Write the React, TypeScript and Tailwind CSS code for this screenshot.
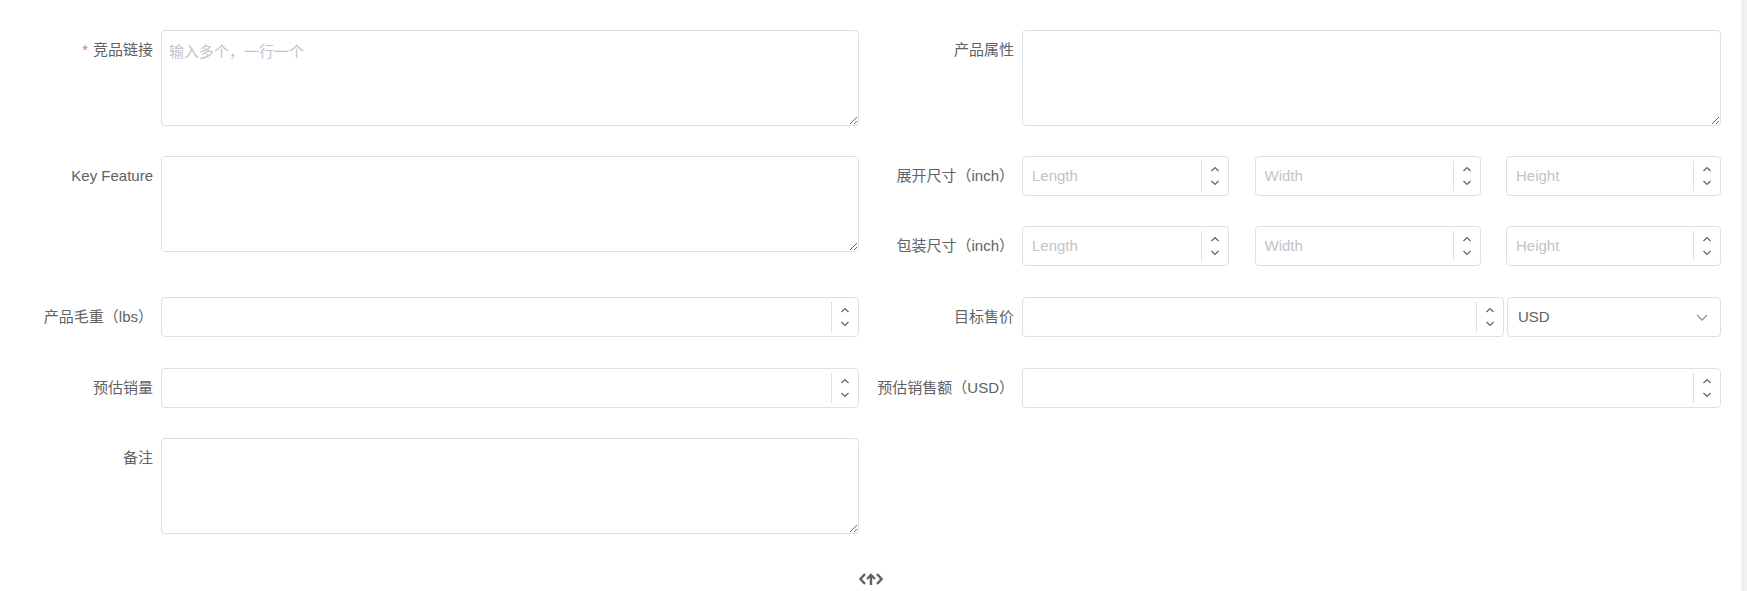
import React from "react";

const FONT = "font-['Liberation_Sans','Noto_Sans_CJK_SC',sans-serif]";

function Chevron({ up }: { up?: boolean }) {
  return (
    <svg width="10" height="6" viewBox="0 0 10 6" fill="none">
      {up ? (
        <polyline points="1.5,5 5,1.5 8.5,5" stroke="#606266" strokeWidth="1.2" fill="none" />
      ) : (
        <polyline points="1.5,1 5,4.5 8.5,1" stroke="#606266" strokeWidth="1.2" fill="none" />
      )}
    </svg>
  );
}

function NumberInput({ placeholder, className = "" }: { placeholder?: string; className?: string }) {
  return (
    <div className={`flex h-[40px] rounded-[4px] border border-[#dcdfe6] bg-white ${className}`}>
      <input
        placeholder={placeholder}
        className="min-w-0 flex-1 bg-transparent px-[9px] text-[15px] text-[#606266] outline-none placeholder:text-[#c0c4cc]"
      />
      <div className="my-[4px] flex w-[27px] flex-col items-center justify-center gap-[8px] border-l border-[#dcdfe6]">
        <Chevron up />
        <Chevron />
      </div>
    </div>
  );
}

function TextArea({ placeholder }: { placeholder?: string }) {
  return (
    <textarea
      placeholder={placeholder}
      className="block h-[96px] w-full rounded-[4px] border border-[#dcdfe6] bg-white px-[7px] py-[10px] text-[15px] leading-[22px] text-[#606266] outline-none placeholder:text-[#c0c4cc]"
    />
  );
}

function Item({
  label,
  required,
  labelW,
  top,
  mb = "mb-[30px]",
  children,
}: {
  label: string;
  required?: boolean;
  labelW: string;
  top?: boolean;
  mb?: string;
  children: React.ReactNode;
}) {
  return (
    <div className={`${mb} flex ${top ? "items-start" : "items-center"}`}>
      <div className={`${labelW} shrink-0 pr-[8px] text-right text-[15px] leading-[40px] text-[#606266]`}>
        {required && <span className="mr-[5px] text-[#f56c6c]">*</span>}
        {label}
      </div>
      <div className="min-w-0 flex-1">{children}</div>
    </div>
  );
}

export default function App() {
  const L = "w-[161px]";
  const R = "w-[152px]";
  return (
    <div className={`flex h-[591px] w-full bg-white ${FONT}`}>
      <div className="flex-1">
        <div className="grid grid-cols-[859px_851px] gap-x-[11px] pt-[30px]">
          <Item label="竞品链接" required labelW={L} top>
            <TextArea placeholder="输入多个，一行一个" />
          </Item>
          <Item label="产品属性" labelW={R} top>
            <TextArea />
          </Item>

          <Item label="Key Feature" labelW={L} top>
            <TextArea />
          </Item>
          <div>
            <Item label="展开尺寸（inch）" labelW={R}>
              <div className="flex justify-between">
                <NumberInput placeholder="Length" className="w-[207px]" />
                <NumberInput placeholder="Width" className="w-[226px]" />
                <NumberInput placeholder="Height" className="w-[215px]" />
              </div>
            </Item>
            <Item label="包装尺寸（inch）" labelW={R}>
              <div className="flex justify-between">
                <NumberInput placeholder="Length" className="w-[207px]" />
                <NumberInput placeholder="Width" className="w-[226px]" />
                <NumberInput placeholder="Height" className="w-[215px]" />
              </div>
            </Item>
          </div>

          <Item label="产品毛重（lbs）" labelW={L} mb="mb-[31px]">
            <NumberInput />
          </Item>
          <Item label="目标售价" labelW={R} mb="mb-[31px]">
            <div className="flex items-center gap-[3px]">
              <NumberInput className="flex-1" />
              <div className="mt-[1px] flex h-[40px] w-[214px] items-center justify-between rounded-[4px] border border-[#dcdfe6] bg-white pl-[10px] pr-[12px]">
                <span className="text-[15px] text-[#606266]">USD</span>
                <svg width="12" height="7" viewBox="0 0 12 7" fill="none">
                  <polyline points="1,1 6,6 11,1" stroke="#909399" strokeWidth="1.3" fill="none" />
                </svg>
              </div>
            </div>
          </Item>

          <Item label="预估销量" labelW={L}>
            <NumberInput />
          </Item>
          <Item label="预估销售额（USD）" labelW={R}>
            <NumberInput />
          </Item>

          <Item label="备注" labelW={L} top>
            <TextArea />
          </Item>
          <div />
        </div>
        <div className="flex justify-center pt-[8px]">
          <svg width="24" height="14" viewBox="0 0 24 14" fill="none">
            <polyline points="6,2 1.5,7 6,12" stroke="#606266" strokeWidth="2.4" fill="none" />
            <polyline points="18,2 22.5,7 18,12" stroke="#606266" strokeWidth="2.4" fill="none" />
            <line x1="12" y1="3" x2="12" y2="13" stroke="#606266" strokeWidth="2.4" />
            <polyline points="8,7 12,3 16,7" stroke="#606266" strokeWidth="2.4" fill="none" />
          </svg>
        </div>
      </div>
      <div className="h-full w-[6px] bg-[#f1f1f1]" />
    </div>
  );
}
